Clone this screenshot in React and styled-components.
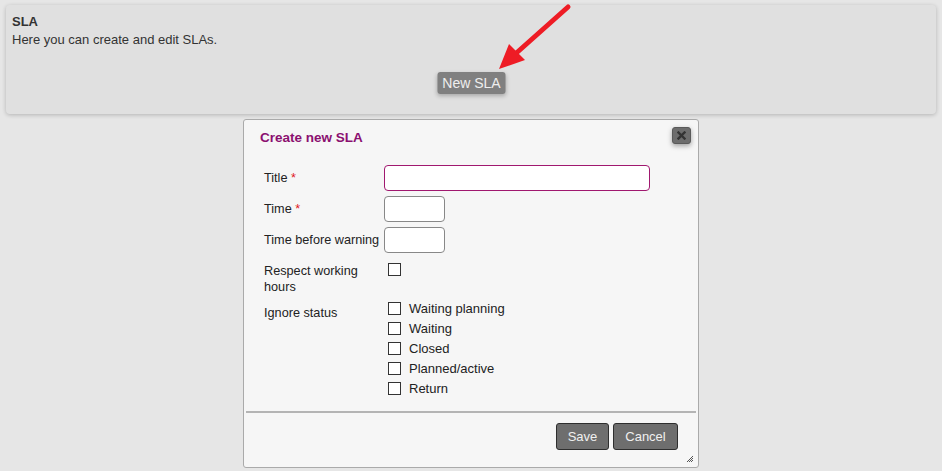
import React from 'react'
import styled, { createGlobalStyle } from 'styled-components'

const Global = createGlobalStyle`
  html, body {
    margin: 0;
    padding: 0;
    background: #e6e6e6;
    font-family: "Liberation Sans", Arial, sans-serif;
    font-size: 13px;
    color: #222;
  }
`

const statuses = ['Waiting planning', 'Waiting', 'Closed', 'Planned/active', 'Return']

const App = () => {
  return (
    <Page>
      <Global />
      <Panel>
        <PanelTitle>SLA</PanelTitle>
        <PanelText>Here you can create and edit SLAs.</PanelText>
        <PanelActions>
          <NewButton>New SLA</NewButton>
        </PanelActions>
      </Panel>

      <Arrow width="80" height="75" viewBox="0 0 80 75">
        <line x1="73" y1="4" x2="18" y2="53" stroke="#ee1c25" strokeWidth="5" strokeLinecap="round" />
        <polygon points="4,66 14,41 30,57" fill="#ee1c25" />
      </Arrow>

      <Dialog>
        <DialogHeader>
          <DialogTitle>Create new SLA</DialogTitle>
          <CloseButton>
            <svg width="9" height="9" viewBox="0 0 9 9">
              <path d="M1.5 1.5 L7.5 7.5 M7.5 1.5 L1.5 7.5" stroke="#333" strokeWidth="2.4" strokeLinecap="square" />
            </svg>
          </CloseButton>
        </DialogHeader>

        <Form>
          <Row>
            <Label>Title <Req>*</Req></Label>
            <TextInput $w={266} $accent />
          </Row>
          <Row>
            <Label>Time <Req>*</Req></Label>
            <TextInput $w={61} />
          </Row>
          <Row>
            <Label>Time before warning</Label>
            <TextInput $w={61} />
          </Row>
          <Row $top={10}>
            <Label $pad={0}>Respect working<br />hours</Label>
            <Check type="checkbox" />
          </Row>
          <Row $top={3}>
            <Label $pad={7}>Ignore status</Label>
            <CheckList>
              {statuses.map(s => (
                <CheckItem key={s}>
                  <Check type="checkbox" />
                  {s}
                </CheckItem>
              ))}
            </CheckList>
          </Row>
        </Form>

        <Footer>
          <ActionButton $w={53}>Save</ActionButton>
          <ActionButton $w={65}>Cancel</ActionButton>
        </Footer>

        <Grip width="8" height="8" viewBox="0 0 8 8">
          <path d="M7 1 L1 7 M7 3 L3 7 M7 5 L5 7" stroke="#555" strokeWidth="1" />
        </Grip>
      </Dialog>
    </Page>
  )
}

export default App

const Page = styled.div`
position: relative;
min-height: 471px;
padding-top: 5px;
overflow: hidden;
`

const Panel = styled.div`
margin: 0 6px;
height: 109px;
box-sizing: border-box;
padding: 9px 6px 0;
background: #e0e0e0;
border-radius: 4px;
box-shadow: 0 1px 4px rgba(0, 0, 0, 0.22);
`

const PanelTitle = styled.div`
font-weight: bold;
font-size: 13px;
color: #333;
line-height: 16px;
`

const PanelText = styled.div`
font-size: 13px;
color: #333;
line-height: 18px;
margin-top: 1px;
`

const PanelActions = styled.div`
display: flex;
justify-content: center;
margin-top: 23px;
`

const NewButton = styled.div`
height: 22px;
line-height: 22px;
padding: 0 5px;
background: #808080;
color: #eee;
font-size: 14px;
border-radius: 3px;
box-shadow: 0 2px 4px rgba(0, 0, 0, 0.25);
transform: translateX(0.5px);
`

const Arrow = styled.svg`
position: absolute;
left: 495px;
top: 3px;
`

const Dialog = styled.div`
position: relative;
width: 456px;
height: 349px;
box-sizing: border-box;
margin: 5px 0 0 243px;
background: #f6f6f6;
border: 1px solid #aaa;
border-radius: 3px;
`

const DialogHeader = styled.div`
display: flex;
justify-content: space-between;
align-items: flex-start;
padding: 7px 7px 0 16px;
height: 37px;
box-sizing: border-box;
`

const DialogTitle = styled.div`
font-weight: bold;
font-size: 13.5px;
color: #8b1070;
line-height: 20px;
margin-top: 1px;
`

const CloseButton = styled.div`
width: 19px;
height: 17px;
box-sizing: border-box;
border: 1px solid #5a5a5a;
border-radius: 3px;
background: #6d6d6d;
display: flex;
align-items: center;
justify-content: center;
box-shadow: 0 2px 5px rgba(0, 0, 0, 0.35);
`

const Form = styled.div`
padding: 8px 0 0 20px;
`

const Row = styled.div`
display: flex;
align-items: flex-start;
margin-top: ${p => (p.$top !== undefined ? p.$top : 5)}px;
&:first-child {
  margin-top: 0;
}
`

const Label = styled.div`
width: 120px;
font-size: 12.7px;
line-height: 16px;
padding-top: ${p => (p.$pad !== undefined ? p.$pad : 5)}px;
color: #222;
white-space: nowrap;
`

const Req = styled.span`
color: #e0161c;
`

const TextInput = styled.input`
width: ${p => p.$w}px;
height: 26px;
box-sizing: border-box;
border: 1px solid ${p => (p.$accent ? '#a0186f' : '#888')};
border-radius: 4px;
background: #fff;
margin: 0;
outline: none;
`

const Check = styled.input`
appearance: none;
width: 13px;
height: 13px;
margin: 0 8px 0 4px;
box-sizing: border-box;
border: 1px solid #333;
background: #fff;
flex: none;
`

const CheckList = styled.div`
display: flex;
flex-direction: column;
`

const CheckItem = styled.label`
display: flex;
align-items: center;
height: 20px;
color: #222;
`

const Footer = styled.div`
position: absolute;
left: 2px;
right: 2px;
top: 291px;
border-top: 2px solid #b4b4b4;
display: flex;
justify-content: flex-end;
gap: 4px;
padding: 10px 18px 0 0;
`

const ActionButton = styled.div`
width: ${p => p.$w}px;
height: 27px;
box-sizing: border-box;
border: 1px solid #2e2e2e;
border-radius: 3px;
background: #6e6e6e;
color: #f0f0f0;
font-size: 13px;
display: flex;
align-items: center;
justify-content: center;
`

const Grip = styled.svg`
position: absolute;
right: 4px;
bottom: 4px;
`
